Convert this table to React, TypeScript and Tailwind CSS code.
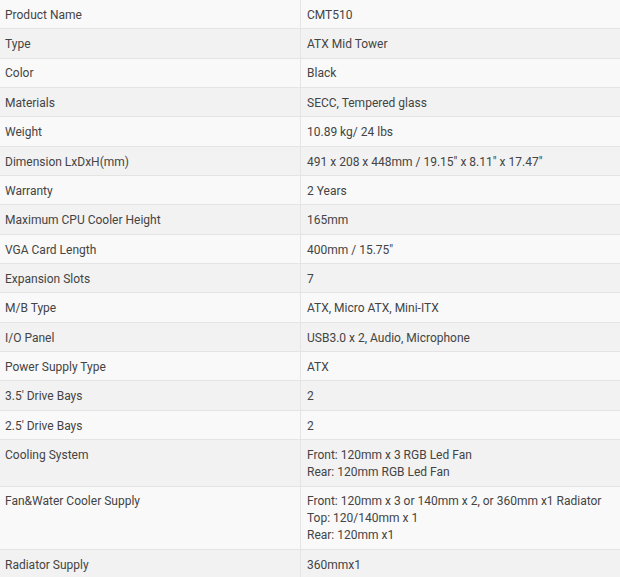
const specs: [string, string[]][] = [
  ["Product Name", ["CMT510"]],
  ["Type", ["ATX Mid Tower"]],
  ["Color", ["Black"]],
  ["Materials", ["SECC, Tempered glass"]],
  ["Weight", ["10.89 kg/ 24 lbs"]],
  ["Dimension LxDxH(mm)", ['491 x 208 x 448mm / 19.15" x 8.11" x 17.47"']],
  ["Warranty", ["2 Years"]],
  ["Maximum CPU Cooler Height", ["165mm"]],
  ["VGA Card Length", ['400mm / 15.75"']],
  ["Expansion Slots", ["7"]],
  ["M/B Type", ["ATX, Micro ATX, Mini-ITX"]],
  ["I/O Panel", ["USB3.0 x 2, Audio, Microphone"]],
  ["Power Supply Type", ["ATX"]],
  ["3.5' Drive Bays", ["2"]],
  ["2.5' Drive Bays", ["2"]],
  ["Cooling System", ["Front: 120mm x 3 RGB Led Fan", "Rear: 120mm RGB Led Fan"]],
  [
    "Fan&Water Cooler Supply",
    ["Front: 120mm x 3 or 140mm x 2, or 360mm x1 Radiator", "Top: 120/140mm x 1", "Rear: 120mm x1"],
  ],
  ["Radiator Supply", ["360mmx1"]],
];

export default function App() {
  return (
    <div className="w-[620px] h-[577px] overflow-hidden bg-white font-['Roboto',sans-serif] text-[12px] leading-[17px] text-[#444]">
      {specs.map(([label, values], i) => (
        <div
          key={label}
          className={`grid grid-cols-[301px_1fr] border-b border-[#e4e4e4] ${
            i % 2 === 0 ? "bg-[#f9f9f9]" : "bg-[#f2f2f2]"
          }`}
        >
          <div className="border-r border-[#e4e4e4] px-[5px] pt-[6.8px] pb-[4.55px]">{label}</div>
          <div className="px-[6px] pt-[6.8px] pb-[4.55px]">
            {values.map((v) => (
              <div key={v}>{v}</div>
            ))}
          </div>
        </div>
      ))}
    </div>
  );
}
